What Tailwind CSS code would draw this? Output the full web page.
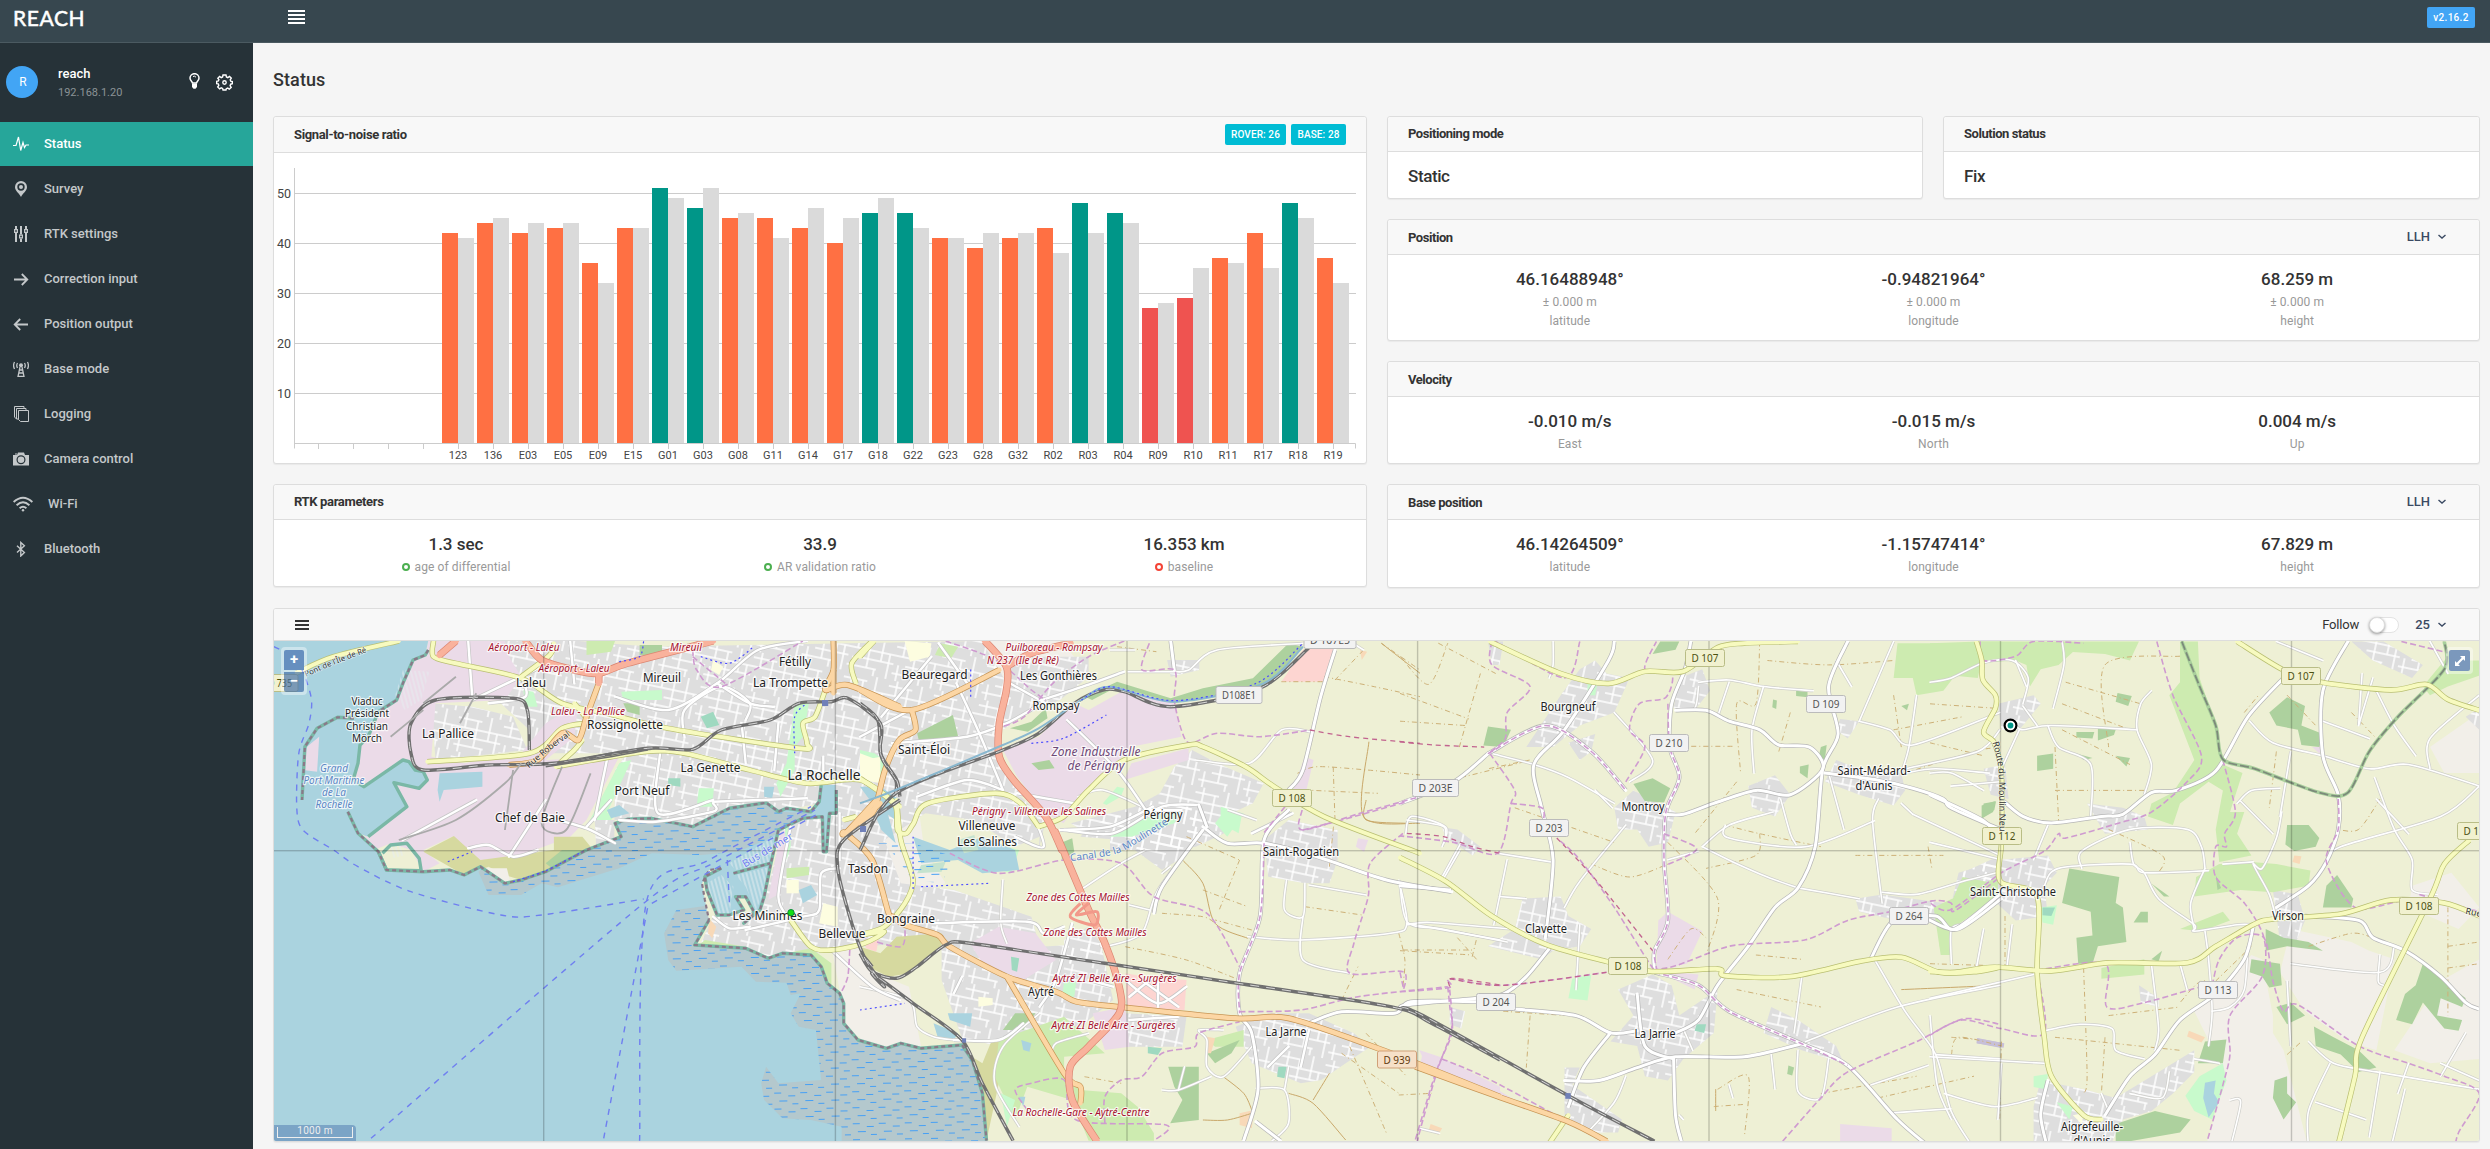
<!DOCTYPE html>
<html lang="en">
<head>
<meta charset="utf-8">
<title>REACH</title>
<script src="https://cdn.jsdelivr.net/npm/@tailwindcss/browser@4"></script>
</head>
<body class="bg-[#f5f5f5] font-['Roboto',sans-serif] text-[13px] leading-5 text-[#333] w-[2490px] h-[1149px] overflow-hidden flex flex-col">

<header class="h-[43px] shrink-0 bg-[#37474f] border-b border-[#4b5a61] flex items-start">
  <div class="w-[288px] pl-[13px] pt-[7px] font-['Lato',sans-serif] font-normal [-webkit-text-stroke:0.5px_#fff] text-[21px] leading-[22px] tracking-[0.6px] text-white">REACH</div>
  <div class="pt-[10px] flex flex-col gap-[2px]">
    <span class="block w-[17px] h-[2px] bg-white"></span><span class="block w-[17px] h-[2px] bg-white"></span><span class="block w-[17px] h-[2px] bg-white"></span><span class="block w-[17px] h-[2px] bg-white"></span>
  </div>
  <div class="ml-auto mr-[15px] mt-[7px] h-[21px] w-[48px] rounded-[2px] bg-[#42a5f5] text-white text-[10px] leading-[22px] font-medium text-center tracking-[0.3px]">v2.16.2</div>
</header>

<div class="flex flex-1 min-h-0">
<aside class="w-[253px] shrink-0 bg-[#263238] text-[#c4c8ca]">
  <div class="h-[79px] flex items-start pt-[23px] pl-[6px]">
    <div class="size-8 rounded-full bg-[#42a5f5] text-white text-[12px] leading-8 text-center pl-[2px]">R</div>
    <div class="ml-5 w-[131px] -mt-[2px]">
      <div class="text-white font-medium leading-5">reach</div>
      <div class="text-[11px] leading-[18px] text-[#8b9296]">192.168.1.20</div>
    </div>
    <svg class="mt-[7px] w-[11px] h-[17px]" viewBox="0 0 11 17" fill="none" stroke="#fff" stroke-width="1.5"><path d="M3.500 10C3 8 1 7.500 1 5a4.500 4.300 0 0 1 9 0c0 2.500-2 3-2.500 5z"/><path d="M3 10.500h5v3.500l-1.500 1.800h-2L3 14z" fill="#fff" stroke="none"/><path d="M4 3.500q2-1 3 .8" stroke-width="1"/></svg>
    <svg class="ml-[16px] mt-[8px] size-[17px]" viewBox="0 0 17 17" fill="none" stroke="#fff" stroke-width="1.400"><path d="M7 1h3l.4 2 1.400.6L13.500 2.400l1.800 1.800-1.100 1.700.5 1.300 1.600.3v2.300l-1.600.4-.6 1.500 1.100 1.600-1.900 1.900-1.600-1.100-1.400.6L10 16H7l-.4-1.600-1.400-.6-1.600 1.100-1.900-1.900 1.100-1.600-.5-1.500L.7 9.600V7.400l1.700-.4.5-1.300L1.800 4.200l1.800-1.800L5.200 3.600l1.400-.6z"/><circle cx="8.500" cy="8.500" r="1.700"/></svg>
  </div>
  <nav class="flex flex-col gap-px font-medium">
    <div class="h-11 flex items-center pl-[13px] gap-[15px] bg-[#26a69a] text-white">
      <svg class="size-4" viewBox="0 0 16 16" fill="none" stroke="currentColor" stroke-width="1.200"><path d="M0 9.500h3L5.500 1l2.200 13.500L10 6.500l1.500 5 1.500-2.500h3"/></svg>Status</div>
    <div class="h-11 flex items-center pl-[13px] gap-[15px]">
      <svg class="size-4" viewBox="0 0 16 16" fill="currentColor"><path fill-rule="evenodd" d="M8 0a6 6 0 0 1 6 6c0 4-4.500 6.500-6 10C6.500 12.500 2 10 2 6a6 6 0 0 1 6-6zm0 2.300a3.700 3.700 0 1 0 0 7.400 3.700 3.700 0 0 0 0-7.400z"/><circle cx="8" cy="6" r="2"/></svg>Survey</div>
    <div class="h-11 flex items-center pl-[13px] gap-[15px]">
      <svg class="size-4" viewBox="0 0 16 16" fill="none" stroke="currentColor"><path stroke-width="2" d="M3 0v3M3 7v9M8 0v8.500M8 12.500V16M13 0v3M13 7v9"/><path stroke-width="1.200" d="M1.600 3.600h2.800v2.800H1.600zM6.600 9.100h2.800v2.800H6.600zM11.600 3.600h2.800v2.800h-2.800z"/></svg>RTK settings</div>
    <div class="h-11 flex items-center pl-[13px] gap-[15px]">
      <svg class="size-4" viewBox="0 0 16 16" fill="none" stroke="currentColor" stroke-width="1.800"><path d="M1 8.500h13M8.800 3l5.500 5.500L8.800 14"/></svg>Correction input</div>
    <div class="h-11 flex items-center pl-[13px] gap-[15px]">
      <svg class="size-4" viewBox="0 0 16 16" fill="none" stroke="currentColor" stroke-width="1.800"><path d="M15 8.500H2M7.200 3L1.700 8.500 7.200 14"/></svg>Position output</div>
    <div class="h-11 flex items-center pl-[13px] gap-[15px]">
      <svg class="size-4" viewBox="0 0 16 16" fill="none" stroke="currentColor" stroke-width="1.300"><path d="M1.500 1Q-.3 4.500 1.500 8M4.500 2Q3 4.500 4.500 7M14.500 1q1.800 3.500 0 7M11.500 2q1.500 2.500 0 5M7 6l-2 9.500h6L9 6M6.200 9h3.600M5.600 12h4.800"/><circle cx="8" cy="4.200" r="2" fill="currentColor" stroke="none"/></svg>Base mode</div>
    <div class="h-11 flex items-center pl-[13px] gap-[15px]">
      <svg class="size-4" viewBox="0 0 16 16" fill="none" stroke="currentColor"><path d="M5.500 4.500h10v11h-8l-2-2zM3.500 13V2.500h9.500V4M1.500 11V.5h9.500V2M1.500 11l2 2h2"/></svg>Logging</div>
    <div class="h-11 flex items-center pl-[13px] gap-[15px]">
      <svg class="size-4" viewBox="0 0 16 16" fill="currentColor"><path fill-rule="evenodd" d="M0 4h4l1-2.500h6L12 4h4v10.500H0zM8 4.300a4.500 4.500 0 1 0 0 9 4.500 4.500 0 0 0 0-9zm0 1.200a3.300 3.300 0 1 1 0 6.600 3.300 3.300 0 0 1 0-6.600z"/><path d="M2 2.500h2v1H2z"/></svg>Camera control</div>
    <div class="h-11 flex items-center pl-[13px] gap-[15px]">
      <svg class="w-5 h-4" viewBox="0 0 20 16" fill="none" stroke="currentColor" stroke-width="1.900"><path d="M.6 6Q10-2.500 19.400 6M3.600 9.200q6.400-5.800 12.800 0M6.600 12.200q3.400-3 6.800 0"/><circle cx="10" cy="14.300" r="1.200" fill="currentColor" stroke="none"/></svg>Wi-Fi</div>
    <div class="h-11 flex items-center pl-[13px] gap-[15px]">
      <svg class="size-4" viewBox="0 0 16 16" fill="none" stroke="currentColor" stroke-width="1.400"><path d="M4 4.800l7.400 6.700-3.600 3.500V1.500l3.600 3.300L4 11.500"/></svg>Bluetooth</div>
  </nav>
</aside>

<main class="flex-1 min-w-0 pl-5 pr-[10px] flex flex-col">
  <h1 class="h-[73px] pt-[25px] text-[18px] leading-6 font-medium tracking-[0.1px]">Status</h1>

  <div class="flex gap-5">
    <!-- left column -->
    <div class="w-[1094px] flex flex-col gap-5">
      <section class="h-[348px] bg-white border border-[#ddd] rounded-[3px] shadow-[0_1px_1px_rgba(0,0,0,0.05)] flex flex-col">
        <div class="h-[36px] shrink-0 bg-[#f8f8f8] border-b border-[#ddd] rounded-t-[3px] flex items-center pl-5 pr-5">
          <h2 class="font-bold tracking-[-0.35px]">Signal-to-noise ratio</h2>
          <span class="ml-auto h-[21px] w-[61px] -mt-px rounded-[2px] bg-[#00bcd4] text-white text-[10px] leading-[21px] font-medium text-center tracking-[0.1px]">ROVER: 26</span>
          <span class="ml-[5px] h-[21px] w-[55px] -mt-px rounded-[2px] bg-[#00bcd4] text-white text-[10px] leading-[21px] font-medium text-center tracking-[0.1px]">BASE: 28</span>
        </div>
        <svg id="snr" class="w-[1092px] h-[310px] font-['Roboto',sans-serif]" viewBox="274 153 1092 310"></svg>
      </section>
      <section class="h-[103px] bg-white border border-[#ddd] rounded-[3px] shadow-[0_1px_1px_rgba(0,0,0,0.05)]">
        <div class="h-[35px] bg-[#f8f8f8] border-b border-[#ddd] rounded-t-[3px] flex items-center pl-5"><h2 class="font-bold tracking-[-0.35px]">RTK parameters</h2></div>
        <div class="grid grid-cols-3 text-center pt-[12px]">
          <div><div class="text-[17px] leading-6 font-medium">1.3 sec</div><div class="text-[12px] tracking-[0.1px] leading-[22px] text-[#999] flex items-center justify-center gap-[5px]"><span class="size-2 rounded-full border-2 border-[#4caf50]"></span>age of differential</div></div>
          <div><div class="text-[17px] leading-6 font-medium">33.9</div><div class="text-[12px] tracking-[0.1px] leading-[22px] text-[#999] flex items-center justify-center gap-[5px]"><span class="size-2 rounded-full border-2 border-[#4caf50]"></span>AR validation ratio</div></div>
          <div><div class="text-[17px] leading-6 font-medium">16.353 km</div><div class="text-[12px] tracking-[0.1px] leading-[22px] text-[#999] flex items-center justify-center gap-[5px]"><span class="size-2 rounded-full border-2 border-[#f44336]"></span>baseline</div></div>
        </div>
      </section>
    </div>

    <!-- right column -->
    <div class="w-[1093px] flex flex-col gap-5">
      <div class="flex gap-5">
        <section class="w-[536px] h-[83px] bg-white border border-[#ddd] rounded-[3px] shadow-[0_1px_1px_rgba(0,0,0,0.05)]">
          <div class="h-[35px] bg-[#f8f8f8] border-b border-[#ddd] rounded-t-[3px] flex items-center pl-5"><h2 class="font-bold tracking-[-0.45px]">Positioning mode</h2></div>
          <div class="pl-5 pt-[12px] text-[17px] leading-6 font-medium tracking-[-0.4px]">Static</div>
        </section>
        <section class="w-[537px] h-[83px] bg-white border border-[#ddd] rounded-[3px] shadow-[0_1px_1px_rgba(0,0,0,0.05)]">
          <div class="h-[35px] bg-[#f8f8f8] border-b border-[#ddd] rounded-t-[3px] flex items-center pl-5"><h2 class="font-bold tracking-[-0.45px]">Solution status</h2></div>
          <div class="pl-5 pt-[12px] text-[17px] leading-6 font-medium tracking-[-0.4px]">Fix</div>
        </section>
      </div>
      <section class="h-[122px] bg-white border border-[#ddd] rounded-[3px] shadow-[0_1px_1px_rgba(0,0,0,0.05)]">
        <div class="h-[35px] bg-[#f8f8f8] border-b border-[#ddd] rounded-t-[3px] flex items-center pl-5 pr-[33px]"><h2 class="font-bold tracking-[-0.45px] pt-px">Position</h2>
          <span class="ml-auto font-medium text-[#3b4a63]">LLH</span><svg class="ml-[8px] size-2" viewBox="0 0 8 8" fill="none" stroke="#3b4a63" stroke-width="1.400"><path d="M.5 2L4 5l3.500-3"/></svg></div>
        <div class="grid grid-cols-3 text-center pt-[12px]">
          <div><div class="text-[17px] leading-6 font-medium">46.16488948°</div><div class="text-[12px] tracking-[0.1px] leading-[19px] pt-[2px] text-[#999]">± 0.000 m<br>latitude</div></div>
          <div><div class="text-[17px] leading-6 font-medium">-0.94821964°</div><div class="text-[12px] tracking-[0.1px] leading-[19px] pt-[2px] text-[#999]">± 0.000 m<br>longitude</div></div>
          <div><div class="text-[17px] leading-6 font-medium">68.259 m</div><div class="text-[12px] tracking-[0.1px] leading-[19px] pt-[2px] text-[#999]">± 0.000 m<br>height</div></div>
        </div>
      </section>
      <section class="h-[103px] bg-white border border-[#ddd] rounded-[3px] shadow-[0_1px_1px_rgba(0,0,0,0.05)]">
        <div class="h-[35px] bg-[#f8f8f8] border-b border-[#ddd] rounded-t-[3px] flex items-center pl-5"><h2 class="font-bold tracking-[-0.45px] pt-px">Velocity</h2></div>
        <div class="grid grid-cols-3 text-center pt-[12px]">
          <div><div class="text-[17px] leading-6 font-medium">-0.010 m/s</div><div class="text-[12px] tracking-[0.1px] leading-[22px] text-[#999]">East</div></div>
          <div><div class="text-[17px] leading-6 font-medium">-0.015 m/s</div><div class="text-[12px] tracking-[0.1px] leading-[22px] text-[#999]">North</div></div>
          <div><div class="text-[17px] leading-6 font-medium">0.004 m/s</div><div class="text-[12px] tracking-[0.1px] leading-[22px] text-[#999]">Up</div></div>
        </div>
      </section>
      <section class="h-[104px] bg-white border border-[#ddd] rounded-[3px] shadow-[0_1px_1px_rgba(0,0,0,0.05)]">
        <div class="h-[35px] bg-[#f8f8f8] border-b border-[#ddd] rounded-t-[3px] flex items-center pl-5 pr-[33px]"><h2 class="font-bold tracking-[-0.4px] pt-[2px]">Base position</h2>
          <span class="ml-auto font-medium text-[#3b4a63]">LLH</span><svg class="ml-[8px] size-2" viewBox="0 0 8 8" fill="none" stroke="#3b4a63" stroke-width="1.400"><path d="M.5 2L4 5l3.500-3"/></svg></div>
        <div class="grid grid-cols-3 text-center pt-[12px]">
          <div><div class="text-[17px] leading-6 font-medium">46.14264509°</div><div class="text-[12px] tracking-[0.1px] leading-[22px] text-[#999]">latitude</div></div>
          <div><div class="text-[17px] leading-6 font-medium">-1.15747414°</div><div class="text-[12px] tracking-[0.1px] leading-[22px] text-[#999]">longitude</div></div>
          <div><div class="text-[17px] leading-6 font-medium">67.829 m</div><div class="text-[12px] tracking-[0.1px] leading-[22px] text-[#999]">height</div></div>
        </div>
      </section>
    </div>
  </div>

  <section class="mt-5 h-[534px] bg-white border border-[#ddd] rounded-[3px] shadow-[0_1px_1px_rgba(0,0,0,0.05)] overflow-hidden flex flex-col">
    <div class="h-[32px] shrink-0 bg-[#f8f8f8] border-b border-[#ddd] flex items-center pl-[21px] pr-[33px]">
      <div class="flex flex-col gap-[2px]"><span class="block w-[14px] h-[2px] bg-[#333]"></span><span class="block w-[14px] h-[2px] bg-[#333]"></span><span class="block w-[14px] h-[2px] bg-[#333]"></span></div>
      <span class="ml-auto tracking-[-0.15px]">Follow</span>
      <span class="ml-[10px] w-[30px] h-4 rounded-full border border-[#e3e3e3] bg-white flex items-center"><span class="-ml-px size-4 rounded-full bg-white border border-[#ddd] shadow-[0_1px_3px_rgba(0,0,0,0.4)]"></span></span>
      <span class="ml-[16px] font-medium text-[#3b4a63]">25</span><svg class="ml-[8px] size-2" viewBox="0 0 8 8" fill="none" stroke="#3b4a63" stroke-width="1.400"><path d="M.5 2L4 5l3.500-3"/></svg>
    </div>
    <div class="relative flex-1 overflow-hidden">
      <svg id="map" class="block w-[2205px] h-[500px] font-['Noto_Sans',sans-serif]" viewBox="274 641 2205 500">
        <defs>
          <pattern id="streets" width="46" height="40" patternUnits="userSpaceOnUse" patternTransform="rotate(12)"><path d="M0 6h24M0 15h46M12 24h34M0 33h30M8 0v15M20 6v27M33 0v24M41 15v25M5 24v16M28 33v7" fill="none" stroke="#fff" stroke-width="1.500"/></pattern>
          <pattern id="flats" width="26" height="16" patternUnits="userSpaceOnUse" patternTransform="rotate(-1)"><path d="M1 2.500h7M15 5.500h7M6 10.500h8M19 13.500h6" stroke="#46a0f5" stroke-width="1.200"/></pattern>
          <pattern id="hatch" width="4" height="4" patternUnits="userSpaceOnUse" patternTransform="rotate(75)"><path d="M0 1h4" stroke="#e6edf0" stroke-width="1"/></pattern>
        </defs>
      </svg>
      <div class="absolute left-[7px] top-[6px] p-[3px] rounded-[4px] bg-white/40 flex flex-col gap-[2px]">
        <span class="w-[20px] h-[20px] rounded-t-[2px] bg-[#668fbf] text-white font-bold text-[15px] leading-[19px] text-center">+</span>
        <span class="w-[20px] h-[20px] rounded-b-[2px] bg-[#003c88]/50 text-white font-bold text-[15px] leading-[18px] text-center">−</span>
      </div>
      <div class="absolute right-[6px] top-[6px] p-[3px] rounded-[4px] bg-white/40">
        <span class="flex items-center justify-center size-[21px] rounded-[2px] bg-[#7b98bc]"><svg class="size-[10px]" viewBox="0 0 10 10" fill="#fff"><path d="M5 0h5v5L8.300 3.300 3.300 8.300 5 10H0V5l1.700 1.700 5-5z"/></svg></span>
      </div>
      <div class="absolute left-0 bottom-0 w-[82px] h-[16px] p-[3px] pt-[2px] rounded-tr-[4px] bg-[#7ba4c6]">
        <div class="h-[11px] border border-t-0 border-[#eee] text-[#eee] text-[10px] leading-[8px] text-center tracking-[0.3px]">1000 m</div>
      </div>
    </div>
  </section>
</main>
</div>

<script>
const NS = 'http://www.w3.org/2000/svg';
function el(parent, tag, attrs, text) {
  const e = document.createElementNS(NS, tag);
  for (const k in attrs) e.setAttribute(k, attrs[k]);
  if (text !== undefined) e.textContent = text;
  parent.appendChild(e);
  return e;
}

/* ---- signal-to-noise chart ---- */
const snr = document.getElementById('snr');
const O = '#ff7043', T = '#009688', R = '#ef5350';
const sats = [['123',42,41,O],['136',44,45,O],['E03',42,44,O],['E05',43,44,O],['E09',36,32,O],['E15',43,43,O],['G01',51,49,T],['G03',47,51,T],['G08',45,46,O],['G11',45,41,O],['G14',43,47,O],['G17',40,45,O],['G18',46,49,T],['G22',46,43,T],['G23',41,41,O],['G28',39,42,O],['G32',41,42,O],['R02',43,38,O],['R03',48,42,T],['R04',46,44,T],['R09',27,28,R],['R10',29,35,R],['R11',37,36,O],['R17',42,35,O],['R18',48,45,T],['R19',37,32,O]];
for (let v = 10; v <= 50; v += 10) {
  el(snr, 'rect', {x: 294, y: 443 - 5 * v, width: 1062, height: 1, fill: '#ccc'});
  el(snr, 'text', {x: 291, y: 447.5 - 5 * v, 'text-anchor': 'end', 'font-size': 12.5, fill: '#444'}, v);
}
el(snr, 'path', {d: 'M294.500 168V448.500M294 443.500H1355.500V448.500', fill: 'none', stroke: '#ccc'});
for (let i = 0; i < 30; i++) el(snr, 'rect', {x: 318 + 35 * i, y: 444, width: 1, height: 5, fill: '#ccc'});
sats.forEach(([name, rover, base, color], i) => {
  const x = 458 + 35 * i;
  el(snr, 'rect', {x: x - 16, y: 443 - 5 * rover, width: 16, height: 5 * rover, fill: color});
  el(snr, 'rect', {x: x, y: 443 - 5 * base, width: 16, height: 5 * base, fill: '#dadada'});
  el(snr, 'text', {x: x, y: 459, 'text-anchor': 'middle', 'font-size': 11, fill: '#444'}, name);
});

/* ---- map ----
   Geometry strings are lists of "x,y"; a letter selects the sheet whose
   local units the following points use. */
const map = document.getElementById('map');
const sheets = {A:[260,470,2.45,3], B:[260,800,2.45,3], C:[860,470,2.8,3], D:[860,800,2.45,3], E:[1400,470,2.6133,2.3093], F:[1930,470,2.8,2.3093], P:[0,0,1,1]};
function pts(s) {
  let t = sheets.P;
  const out = [];
  for (const w of s.trim().split(/\s+/)) {
    if (sheets[w]) { t = sheets[w]; continue; }
    const [x, y] = w.split(',').map(Number);
    out.push([t[0] + x / t[2], t[1] + y / t[3]]);
  }
  return out;
}
const f1 = n => n.toFixed(1);
function line(s) { return 'M' + pts(s).map(p => f1(p[0]) + ' ' + f1(p[1])).join('L'); }
function curve(s) {
  const p = pts(s);
  let d = 'M' + f1(p[0][0]) + ' ' + f1(p[0][1]);
  for (let i = 0; i < p.length - 1; i++) {
    const a = p[i - 1] || p[i], b = p[i], c = p[i + 1], e = p[i + 2] || c;
    d += 'C' + [b[0] + (c[0] - a[0]) / 7, b[1] + (c[1] - a[1]) / 7, c[0] - (e[0] - b[0]) / 7, c[1] - (e[1] - b[1]) / 7, c[0], c[1]].map(f1).join(' ');
  }
  return d;
}
function area(fill, ...list) { for (const s of list) el(map, 'path', {d: line(s) + 'Z', fill}); }
function stroke(color, width, dash, list, cap) {
  for (const s of list) el(map, 'path', {d: curve(s), fill: 'none', stroke: color, 'stroke-width': width, 'stroke-dasharray': dash || 'none', 'stroke-linejoin': 'round', 'stroke-linecap': cap || 'butt'});
}
function road(casing, fill, w, list) { stroke(casing, w + 1.4, '', list); stroke(fill, w, '', list, 'round'); }

area('#eef0d5', '274,641 2479,641 2479,1141 274,1141');

/* pale heath and scrub */
area('#f2efe9',
  'C 300,513 560,513 600,560 500,640 380,640',
  'C 100,980 160,980 180,1140 100,1140', 'D 0,60 130,100 210,250 120,290 40,250',
  'D 0,500 120,560 150,740 0,740', 'B 1400,440 1470,440 1500,560 1568,600 1568,745 1440,700',
  'F 740,1250 900,1120 930,1130 960,1260 960,1300 990,1340 1060,1568 770,1568 830,1400',
  'F 1010,1060 1180,1090 1230,1110 1300,1130 1250,1340 1170,1320 1050,1250 980,1160',
  'F 1400,640 1538,560 1538,700 1440,700', 'F 1460,930 1350,960 1340,1010 1480,1060 1538,1010',
  'F 1430,1180 1538,1130 1538,1360 1400,1370 1300,1340');

/* town ground */
const towns = [
  'A 412,513 780,513 960,530 C 340,513 390,600 410,640 380,760 390,840 450,980 520,1050 500,1140 D 440,110 380,140 280,60 160,40 60,120 100,250 230,270 420,350 440,440 590,430 620,600 530,690 430,720 350,740 250,715 200,540 200,450 110,430 0,440 B 1420,440 1350,465 1245,475 1190,445 1080,430 1110,350 1230,330 1260,190 1280,80 1380,40 1370,10 1270,35 1220,8 1060,75 880,60 820,60 860,960 A 870,900 900,850 660,850 660,780 590,700 620,620',
  'A 420,700 520,710 620,740 655,840 430,870',
  'C 440,560 640,560 640,620 560,690 450,740 400,780 400,640',
  'C 860,570 950,570 950,600 870,620', 'C 770,1010 840,970 880,890 930,840 1000,880 1130,940 1100,1000 1040,1030 1020,1090 940,1130 840,1140 700,1140 700,1060 620,1080 590,1060',
  'D 560,80 700,10 840,10 840,100 780,180 740,210 640,120 540,110',
  'D 990,120 1050,60 1170,90 1170,180 1150,250 1090,250 1000,230',
  'D 500,420 560,380 590,430 570,470 500,500', 'D 920,680 1000,640 1100,640 1210,700 1250,740 1190,790 1130,840 1080,850 960,790',
  'D 650,640 800,650 790,740 650,740',
  'E 470,460 510,440 540,470 600,480 560,560 470,590 400,640 370,640 330,640 420,520', 'E 440,630 510,610 500,650 470,670', 'E 230,396 270,396 260,450 240,450',
  'E 730,480 790,460 810,510 770,555 715,550', 'E 560,780 610,740 700,780 720,790 700,860 650,870 620,830 570,830',
  'E 910,730 980,705 1020,750 980,800 920,780', 'E 1140,670 1200,690 1310,700 1320,740 1290,775 1200,750 1110,720', 'E 1150,575 1200,580 1170,620 1140,600',
  'E 320,990 420,985 440,1030 500,1060 470,1100 400,1110 370,1130 230,1100 300,1060',
  'E 570,1200 660,1165 710,1190 730,1260 830,1200 820,1300 740,1360 700,1410 640,1400 620,1330 550,1320 610,1260',
  'E 970,1240 1040,1270 1140,1330 1160,1370 1050,1340 950,1300', 'E 1190,990 1260,980 1420,1000 1440,1050 1300,1040 1200,1020', 'E 430,1380 470,1380 450,1420 580,1500 570,1530 490,1530 430,1500',
  'E 110,825 150,830 210,870 190,890 120,850', 'E 130,1240 170,1250 160,1290 130,1280', 'E 1470,930 1568,890 1568,980 1470,980',
  'F 190,540 290,520 310,540 250,600 200,600', 'F 150,690 210,680 220,760 170,750', 'F 80,930 200,900 330,890 355,930 320,960 330,1030 240,1040 160,980 60,1060 60,1000',
  'F 440,770 540,780 600,800 610,830 490,840', 'F 1180,396 1270,396 1380,450 1350,480 1240,440', 'F 960,970 1030,980 1050,1040 1020,1100 980,1090', 'F 310,1410 430,1430 520,1450 640,1390 740,1340 740,1390 680,1440 620,1480 540,1500 500,1568 290,1568 290,1470', 'F 1500,570 1538,550 1538,600', 'F 585,1190 640,1220 640,1240 590,1230'];
area('#dedede', ...towns);
area('url(#streets)', ...towns);

/* industrial and retail ground */
const port = 'A 412,513 600,513 610,560 640,620 600,690 430,700 420,860 500,880 640,850 660,820 700,760 780,700 770,800 700,870 880,860 B 800,60 760,110 620,175 540,180 470,110 400,150 440,190 400,215 370,150 320,130 280,150 215,35 265,115 265,100 A 360,1010 328,938 390,955 410,930 400,905 380,900 365,875 350,870 255,950 228,930 240,880 245,825 265,800 290,725 335,690 350,640 375,570 405,555';
area('#ebdbe8', port, 'B 1275,95 1290,90 1275,280 1245,300',
  'C 400,840 500,800 600,700 640,720 740,660 880,700 900,800 760,830 700,900 620,980 570,1060 520,1030 440,920', 'C 760,880 920,835 920,870 740,930',
  'C 1245,860 1270,870 1250,960 1210,970', 'D 270,430 340,380 430,400 480,480 400,540 300,490', 'D 570,640 650,620 660,740 600,750', 'D 1370,750 1420,770 1568,860 1568,880 1400,830',
  'D 1220,115 1245,120 1235,155 1215,140', 'E 675,1040 700,1020 790,1065 750,1140 670,1155', 'E 720,1160 780,1165 770,1200 700,1170', 'E 1150,1510 1285,1520 1285,1568 1150,1568', 'E 60,1345 140,1370 310,1460 120,1400 50,1380', 'F 1070,640 1100,640 1090,655');
area('#fdd5d1', 'D 650,520 700,530 800,540 795,630 655,625', 'C 1240,540 1330,520 1300,635 1180,635', 'B 1480,425 1515,420 1510,455 1485,445');
area('#c7bfd8', 'F 132,1312 208,1324 206,1334 130,1324', 'E 1510,1313 1568,1322 1568,1334 1508,1324');

/* scrub */
area('#d6d99f', 'B 400,155 475,108 540,180 600,170 720,150 720,110 790,110 810,140 720,210 640,240 600,225 560,200 500,225',
  'D 0,440 50,460 90,410 200,400 200,440 120,520 70,530 20,500', 'D 320,730 400,700 390,740 340,850 310,1022 290,880 260,760 300,790');

/* grass, woods, parks */
area('#cdebb0', 'A 800,513 870,513 860,545 800,555', 'C 225,520 275,530 255,565 210,555', 'B 1290,205 1345,200 1345,225 1290,235', 'B 1090,420 1190,440 1245,470 1350,445 1400,490 1400,560 1375,500 1350,465 1245,475 1190,445 1070,440',
  'D 340,720 500,650 600,760 500,770 500,830 540,870 640,880 680,920 720,1000 720,1022 560,1022 520,900 410,860 380,960 330,830',
  'D 850,720 940,690 940,740 870,740',
  'E 1300,400 1470,400 1510,396 1568,396 1568,440 1520,440 1510,480 1450,475 1420,510 1350,520 1340,480 1290,480',
  'F 0,400 140,396 585,396 560,440 490,425 400,420 360,450 310,460 280,500 270,450 240,440 150,445 60,480 30,510 0,510',
  'F 700,396 750,396 755,480 800,590 820,680 875,700 840,790 880,790 860,840 900,890 810,905 800,830 820,740 780,720 700,770 680,820 610,800 620,770 680,745 740,670 670,520 700,490',
  'F 745,940 810,910 900,905 970,910 1065,925 1060,960 960,975 870,970 740,985', 'F 10,1010 190,940 190,990 130,1020 60,1060 60,1120 30,1120', 'F 700,1060 820,1020 840,1040 760,1065',
  'F 1380,500 1440,440 1538,440 1538,475 1450,500 1400,520', 'F 480,1150 600,1130 600,1165 480,1175', 'E 1470,940 1530,950 1560,960 1500,1020 1430,1050 1440,1110 1410,1100 1410,1060');
area('#add19e', 'A 930,525 985,525 985,560 930,555', 'A 890,700 930,700 930,735 900,725', 'C 160,790 260,735 275,800 165,812', 'C 420,775 480,755 520,715 525,745 470,785', 'C 480,880 530,870 545,895 500,900',
  'C 630,680 720,635 870,685 960,655 1100,625 1200,520 1240,530 1140,650 880,700 720,650 650,690', 'D 490,130 520,115 525,155 495,180', 'D 755,800 830,800 830,960 760,970 790,900 770,860',
  'D 850,760 930,720 910,760 870,790', 'D 380,640 430,640 400,690 350,690', 'B 700,190 740,150 790,150 720,210',
  'E 230,592 290,600 270,640 218,636', 'E 610,725 660,712 706,735 690,768 640,765', 'E 660,425 680,396 730,396 720,415', 'E 1100,640 1115,635 1110,670 1095,660', 'E 1045,685 1068,680 1065,712 1045,700',
  'E 1520,775 1555,765 1550,790 1520,805', 'E 1035,510 1065,512 1065,525 1035,522', 'E 975,530 985,532 983,552 973,548', 'E 1310,545 1330,540 1325,555', 'E 1015,1375 1030,1380 1025,1398 1012,1395',
  'F 525,515 565,522 555,545 520,535', 'F 950,560 1000,525 1050,545 1040,590 1100,610 1090,640 1040,635 1030,600 970,590', 'F 410,605 460,605 455,620 410,618', 'F 470,595 520,600 515,612 470,625', 'F 300,660 345,655 345,690 300,695', 'F 410,655 455,665 430,670', 'F 520,660 560,665 550,685', 'F 150,770 185,765 180,785 145,805',
  'F 1000,820 1060,820 1090,850 1080,870 1020,880 995,865', 'F 390,920 530,940 520,1000 540,1010 550,1090 470,1100 455,1140 415,1140 410,1080 455,1075 450,1020 370,1000', 'F 1110,960 1140,935 1185,990 1180,1010 1100,1010',
  'F 940,1060 990,1080 1060,1090 1100,1110 1000,1100 940,1110', 'F 900,1130 980,1140 985,1190 950,1195 930,1170 895,1160', 'F 970,1240 1010,1230 1050,1260 1000,1280', 'F 1075,1285 1130,1310 1200,1340 1250,1380 1200,1390 1150,1350 1080,1330',
  'F 1380,1140 1440,1180 1500,1220 1490,1240 1430,1220 1420,1260 1490,1270 1480,1295 1440,1290 1380,1230 1350,1280 1305,1270 1330,1210 1360,1190',
  'F 965,1410 1000,1400 1000,1440 1025,1460 990,1500 960,1450', 'F 770,1320 830,1315 820,1370 750,1370', 'F 520,1510 630,1480 730,1500 700,1530 560,1550 540,1568 520,1568', 'F 590,1020 610,1020 610,1045 570,1045', 'F 620,1130 650,1110 640,1135', 'F 800,935 815,965 805,970', 'F 620,955 670,985 655,985');
area('#c8facc', 'A 880,880 910,870 850,1030 880,1020 860,1050 B 820,60 800,80', 'A 1075,955 1112,955 1108,1010 1070,1010', 'A 645,660 670,665 680,710 650,710', 'A 885,665 985,660 985,690 890,690', 'A 1310,700 1345,700 1330,800 1310,830 1310,900 1275,980 1265,940 1290,880',
  'C 680,1000 720,950 740,955 730,980 690,1005', 'C 0,840 40,850 80,880 60,920 0,900', 'C 1010,1010 1070,1030 1060,1090 1010,1060', 'C 700,1100 780,1050 900,1020 880,1060 760,1100', 'D 330,130 390,150 370,220 310,200', 'D 500,545 530,545 525,590 495,590', 'D 895,30 940,40 900,110 870,70', 'D 345,880 380,900 360,980',
  'E 450,1175 500,1165 490,1225 440,1220', 'E 490,490 515,495 510,520 490,520', 'F 755,1400 820,1370 830,1410 790,1500 740,1480 715,1445', 'F 290,1400 330,1395 325,1430 290,1425', 'F 355,1460 400,1470 390,1500', 'F 310,1010 355,1005 345,1050 315,1045', 'B 1285,60 1300,60 1300,140 1290,180');
area('#9fd9c0', 'D 1025,800 1045,800 1040,835 1022,830', 'F 315,1010 350,1010 340,1030 315,1028', 'A 1080,740 1110,725 1125,765 1095,775', 'D 705,740 740,745 730,765 705,760', 'E 775,1280 800,1280 795,1300 770,1295', 'A 1000,925 1030,925 1030,950 1000,945', 'D 370,470 390,475 385,515 372,510');
area('#fdfde0', 'C 125,513 200,520 195,560 140,575', 'A 1110,570 1135,590 1125,615 1105,600', 'A 1480,870 1520,860 1520,940 1475,930', 'C 0,850 50,870 50,930 0,925', 'D 290,590 325,595 325,615 290,620', 'B 1380,310 1415,320 1415,380 1370,370', 'B 1290,240 1320,240 1320,280 1290,280', 'F 400,1490 430,1485 425,1510');
area('#f8d9b8', 'F 725,1295 770,1310 760,1322 720,1308', 'F 1020,890 1040,892 1035,910 1015,905', 'C 1400,540 1420,545 1405,570', 'D 850,710 870,715 860,760 850,760', 'D 930,940 965,930 960,985 930,975', 'E 80,1510 110,1520 100,1535 75,1525', 'B 1100,355 1118,380 1108,415 1098,400');

/* sea and inland water */
area('#aad3df', '274,641 A 412,513 405,555 375,570 350,640 335,690 290,725 265,800 245,825 240,880 228,930 255,950 350,870 365,875 380,900 400,905 410,930 390,955 328,938 360,1010 265,1100 B 265,110 240,100 290,155 310,210 400,215 465,210 500,225 540,200 600,250 640,240 700,215 800,150 885,110 870,70 900,58 960,55 1060,80 1150,25 1240,8 1270,35 1290,25 1350,35 1370,5 1375,-45 1410,-45 1412,40 1395,40 1390,155 1380,155 1378,50 1330,55 1270,90 1250,200 1235,290 1225,330 1185,370 1210,335 1190,290 1165,290 1185,330 1150,345 1120,345 1095,270 1090,230 1130,205 1100,210 1083,250 1090,300 1100,360 1065,435 1190,445 1245,475 1280,460 1350,465 1375,500 1390,550 1420,580 1430,610 1430,670 1465,720 1535,745 D 100,730 150,745 250,735 275,780 300,880 310,1022 274,1141 P 274,1141',
  'A 440,910 545,905 545,950 450,960 440,995 435,960', 'A 1470,950 1520,950 1568,990 1568,1060 1500,1000', 'A 850,1020 880,1005 905,1030 860,1045', 'A 1235,950 1260,950 1255,985 1235,980',
  'B 1320,270 1350,255 1365,285 1330,310', 'D 130,110 220,150 300,110 380,150 390,210 300,220 240,180 150,190', 'D 215,640 275,640 270,680 220,660', 'D 395,720 420,730 415,755 400,750', 'D 180,670 240,700 230,720 190,710', 'D 390,890 405,890 400,920', 'F 770,1415 800,1410 795,1440 810,1460 780,1495 765,1450', 'C 40,1030 75,1020 100,1120 60,1080');
area('#c5e3cf', 'D 240,120 280,105 290,150 255,160', 'D 150,195 210,185 200,215 140,220');
area('#ebdbe8', 'A 115,830 145,800 140,905 105,900');
area('#f2efe9', 'B 545,205 605,205 612,240 600,250');
const flats = ['B 885,110 870,70 900,58 960,55 1060,80 1150,25 1240,8 1270,35 1350,40 1240,120 1170,155 1080,165 960,160 880,205 800,235 730,262 690,250 640,285 560,285 535,215 545,205 600,250 640,240 700,215 800,150',
  'B 1090,318 1020,330 990,400 1000,480 1020,512 1180,500 1215,545 1290,548 1300,585 1325,580 1300,640 1320,680 1362,690 1375,840 1270,850 1240,800 1228,850 1235,900 1280,955 1350,960 1425,980 1425,1022 D 310,1022 300,880 275,780 250,735 150,745 100,730 B 1535,745 1465,720 1430,670 1430,610 1420,580 1390,550 1375,500 1350,465 1280,460 1245,475 1190,445 1065,435 1100,360'];
area('#b4c8cd', ...flats);
area('url(#flats)', ...flats, 'D 40,130 130,130 230,170 200,250 130,240 80,160');
area('url(#hatch)', 'B 1095,250 1130,225 1160,260 1150,345 1120,345', 'B 1165,225 1250,200 1230,290 1215,330 1190,260', 'B 1150,190 1260,110 1250,185 1165,210', 'B 320,140 350,135 355,165 325,175', 'A 350,600 415,605 395,690 355,720 330,680');

/* coast outline */
const coast = ['A 412,540 405,555 375,570 350,640 335,690 290,725 265,800 245,825 240,880 228,930 255,950 350,870 365,875 380,900 400,905 410,930 390,955 328,938 360,1010 265,1100',
  'A 230,745 190,742 140,775 110,830 103,990', 'B 215,35 240,100 290,155 310,210 400,215 465,210 500,225 540,200 600,250 640,240 700,215 800,150 885,110 870,70 900,58 960,55 1060,80 1150,25 1240,8 1270,35 1290,25 1350,35 1370,5 1375,-45',
  'B 1412,-30 1412,40 1395,40 1388,155 1380,155 1378,50 1330,55 1270,90 1250,200 1235,290 1225,330 1185,370 1210,335 1190,290 1165,290 1185,330 1150,345 1120,345 1095,270 1090,230 1130,205', 'B 1100,360 1065,435 1190,445 1245,475 1280,460 1350,465 1375,500 1390,550 1420,580 1430,610 1430,670 1465,720 1535,745 D 100,730 150,745 250,735 275,780 300,880 310,1022', 'B 1160,220 1250,190', 'B 290,155 310,210 395,212 390,175 360,130 320,135 300,160'];
for (const s of coast) el(map, 'path', {d: line(s), fill: 'none', stroke: '#7ab8a6', 'stroke-width': 3.4, 'stroke-linejoin': 'round'});
for (const s of coast.slice(1, 6).concat('A 412,540 405,555 375,570 350,640 335,690 290,725', 'B 1130,205 1100,210 1083,250 1090,300 1100,360')) el(map, 'path', {d: line(s), fill: 'none', stroke: '#8a7888', 'stroke-width': 2.2, 'stroke-dasharray': '4 3', 'stroke-linejoin': 'round'});

/* field tracks */
stroke('#cdb077', 1, '5 3 1 3', [
  'C 1300,620 1440,650 1568,680', 'C 1330,630 1410,540', 'C 1180,635 1300,635', 'C 1460,520 1568,600', 'C 1245,960 1450,970', 'C 1225,910 1280,890 1420,900 1568,915', 'C 1330,1050 1325,890', 'C 720,530 830,545',
  'D 840,270 950,320', 'D 930,180 880,330', 'D 800,110 930,180', 'D 740,340 840,350 870,370', 'D 650,440 800,480 930,540', 'D 1090,320 1230,345', 'D 1330,450 1500,450', 'D 1320,400 1335,480 1330,560', 'D 1500,470 1510,420', 'D 1180,760 1320,880', 'D 1200,740 1290,1000', 'D 1240,700 1340,830', 'D 1320,885 1400,880', 'D 1180,600 1220,500', 'D 960,390 870,360', 'D 550,830 640,850', 'D 1160,80 1150,200',
  'E 0,516 180,575', 'E 0,430 75,495 125,400', 'E 155,640 210,470', 'E 160,710 340,670 230,690', 'E 730,638 870,638', 'E 940,396 930,540 880,540 890,700', 'E 880,720 770,840', 'E 940,840 930,890 800,920', 'E 850,820 940,840 1100,870', 'E 700,860 830,990 800,1120', 'E 500,910 600,940 700,910', 'E 300,780 560,860', 'E 0,1110 190,1120', 'E 150,1080 200,1130', 'E 270,1250 440,1260', 'E 1190,890 1420,890', 'E 1380,870 1390,920', 'E 960,440 1120,450 1290,440', 'E 1020,560 990,650', 'E 1320,700 1500,650 1568,640', 'E 930,1120 1050,1130', 'E 880,1200 1100,1240', 'E 830,1430 910,1400 900,1540', 'E 820,1470 900,1465', 'E 1290,520 1310,640', 'E 0,580 170,590', 'E 1100,1440 1350,1400', 'E 340,1260 330,1380', 'E 700,1130 760,1060 800,1080', 'E 1250,1450 1500,1400', 'E 100,400 250,470', 'E 1290,600 1470,570',
  'F 0,540 180,550', 'F 0,630 150,660', 'F 380,490 590,540', 'F 370,540 560,600', 'F 350,640 360,810', 'F 350,740 600,740', 'F 370,600 560,680', 'F 700,430 490,450 500,640', 'F 500,830 650,890 640,930', 'F 430,1150 440,1400 430,1440', 'F 490,1310 480,1440', 'F 350,1310 700,1340', 'F 500,1260 700,1240', 'F 1450,1010 1450,1260', 'F 1450,1100 1538,1090', 'F 1450,1150 1538,1140', 'F 970,650 950,780', 'F 1260,760 1200,830 1140,830', 'F 1060,1100 1180,1070 1240,1080', 'F 210,1030 210,1150', 'F 200,1320 195,1500', 'F 60,1310 130,1315', 'F 1000,1350 1040,1320', 'F 880,560 920,520', 'F 1000,520 1080,590', 'F 1180,560 1250,620', 'F 0,1140 190,1145', 'F 60,1350 80,1310 200,1330', 'F 820,1200 760,1180 700,1230', 'F 800,1180 900,1100']);
stroke('#c9a86a', 1, '', ['D 790,180 840,250 870,370 950,415', 'D 1240,0 1240,60 1340,70', 'D 1050,880 1110,910 1190,1020', 'D 890,830 940,880 960,930', 'D 840,960 900,960 960,940', 'D 1150,820 1110,900', 'C 1425,815 1410,1040 1568,1060', 'C 1460,520 1520,570 1568,610', 'E 1310,1200 1568,1190', 'E 825,1430 825,1480']);

/* minor roads */
road('#cfcfcb', '#fff', 1.6, [
  'C 750,605 870,605 920,600 1000,540 1240,520', 'C 940,870 1090,880 1180,780 1260,785', 'C 700,540 770,540', 'C 610,980 680,960 790,1010', 'C 1030,1020 1110,1050', 'C 1370,513 1410,540',
  'D 590,430 600,440 690,400 730,270 840,90', 'D 540,270 640,190 700,150', 'D 740,220 760,200', 'D 1320,240 1340,370 1300,400 1080,420 950,410', 'D 1090,250 1085,350 1040,330 1045,240', 'D 1085,350 1085,480 1200,520', 'D 1100,255 1240,285', 'D 1340,370 1568,420', 'D 1430,235 1470,150', 'D 1340,60 1430,80 1430,130', 'D 890,690 830,690 850,720 850,800 890,830 960,740', 'D 740,870 780,870 860,830', 'D 780,870 795,800', 'D 970,865 1040,870 1050,970 1010,1022', 'D 1050,800 1040,870', 'D 350,240 345,370 360,430', 'D 660,315 710,330', 'D 560,700 480,730 470,770', 'D 0,560 120,600 140,680 180,710 230,720', 'D 390,980 330,850 350,740 440,640', 'D 1370,985 1420,1000',
  'E 240,655 350,680 440,710 560,770', 'E 555,780 510,740', 'E 560,560 660,670 600,720', 'E 860,490 830,570', 'E 950,500 920,600 925,700', 'E 780,490 860,485 950,500 1080,510', 'E 1200,580 1290,396', 'E 1200,580 1280,600 1340,635 1568,560', 'E 1320,690 1510,650 1568,600', 'E 1350,520 1330,640 1310,700', 'E 1320,700 1400,690 1540,700', 'E 1120,700 1160,830', 'E 1250,760 1235,810 1260,1000', 'E 850,820 860,850 1060,870 1240,810', 'E 995,760 1020,840 1035,865', 'E 975,790 860,820 790,870', 'E 790,870 870,905 960,940 1040,965', 'E 1040,965 1200,990', 'E 700,900 780,880', 'E 255,885 395,905', 'E 245,1050 280,900', 'E 260,985 330,990', 'E 0,960 20,1045 110,1060 280,1090', 'E 20,1050 80,1045 290,1060', 'E 160,860 110,940', 'E 110,870 120,825 30,800 15,840', 'E 590,820 470,950 430,1010', 'E 470,1050 460,1200', 'E 1050,1170 1030,1300', 'E 970,1350 980,1430', 'E 1040,1340 1040,1435 1100,1450 1120,1360', 'E 1060,1320 1300,1240 1568,1190', 'E 1240,1130 1320,1250 1400,1350 1440,1480 1500,1568', 'E 1400,1350 1568,1360', 'E 1280,1485 1440,1475', 'E 1230,1420 1380,1375', 'E 860,1420 870,1450', 'E 490,1530 560,1460 590,1400', 'E 730,1490 740,1500', 'E 740,1290 765,1340', 'E 400,396 400,450 390,480', 'E 720,555 770,550 780,500', 'E 1260,975 1350,980 1470,950 1560,930', 'E 1340,795 1568,890', 'E 1310,770 1340,795', 'E 1440,730 1568,720', 'E 1140,440 1180,500',
  'F 0,490 60,480 150,445 230,440 275,480 260,540', 'F 370,396 375,450 345,550', 'F 240,590 260,600 340,590 580,600', 'F 330,590 360,640 450,680 450,800', 'F 620,510 590,540 580,600 620,680 600,750', 'F 250,600 200,690', 'F 260,545 300,590', 'F 0,700 60,700 150,740', 'F 425,920 425,880 560,830 720,830 760,870 770,920', 'F 320,960 360,920 560,910 600,930 780,925', 'F 560,860 570,910 600,930 640,990 740,1050 740,1065 860,1050 905,1050', 'F 770,920 730,1000 740,1060', 'F 770,1065 780,1130 790,1250 780,1330', 'F 895,580 960,630 1100,660 1230,690 1340,680 1538,730', 'F 1010,650 980,800', 'F 860,770 900,740 980,735', 'F 870,765 960,840', 'F 985,790 970,850 930,920 905,910 950,980 970,1040', 'F 820,910 905,905', 'F 1245,710 1300,830 1350,900 1350,970 1420,980', 'F 1100,580 1230,620', 'F 1200,590 1210,470', 'F 1250,510 1300,590 1360,660', 'F 1538,730 1430,800 1150,870 1110,905', 'F 970,396 1100,440', 'F 1400,690 1400,620 1538,520', 'F 1450,470 1400,396', 'F 1200,590 1240,480', 'F 1010,1140 1260,1160 1300,1100', 'F 1260,1120 1255,1180 1270,1190', 'F 150,1060 130,1150', 'F 230,1050 215,1150', 'F 100,1050 60,1060 60,1140', 'F 0,1220 290,1165', 'F 320,1295 420,1280 510,1290 520,1340 600,1360', 'F 0,1355 320,1370', 'F 0,1260 20,1420 60,1500', 'F 40,1440 180,1470 300,1450', 'F 200,1370 190,1500', 'F 620,1140 640,1290 630,1340', 'F 700,1140 720,1200', 'F 890,1100 880,1200 840,1240 790,1250', 'F 1000,1180 1010,1330', 'F 1060,1320 1130,1370 1250,1390 1538,1430', 'F 1120,1370 1060,1480 1060,1568', 'F 1080,1460 1220,1500', 'F 1260,1390 1230,1540', 'F 1330,1430 1290,1568', 'F 1500,1300 1430,1400', 'F 1430,1370 1538,1410', 'F 840,1455 870,1460 840,1568', 'F 740,1360 810,1370', 'F 670,1390 650,1450 560,1440', 'F 480,1440 500,1480', 'F 1340,840 1250,760', 'F 330,820 290,900', 'F 0,860 200,900', 'F 240,440 270,500', 'F 1340,1370 1310,1440']);

/* urban avenues */
road('#c6c6c6', '#fff', 2.4, [
  'A 510,513 520,680', 'A 640,620 650,680 560,700', 'A 520,690 690,590', 'A 760,513 770,640', 'A 870,680 1000,720 1120,640 1220,540 1340,513', 'A 1040,800 1040,720 1130,650 1200,700 1190,750', 'A 1120,640 1200,700 1260,710', 'A 1380,860 1380,930', 'A 850,870 820,1050', 'A 1110,995 1340,985', 'A 980,850 975,1030 1110,990', 'A 1180,760 1190,880', 'A 1270,760 1260,900',
  'B 610,170 700,0', 'B 510,145 560,135 620,170 680,150', 'B 350,120 530,0', 'B 800,80 860,0', 'B 880,60 970,65 1110,35 1110,10', 'B 700,50 800,85 870,130', 'B 1300,80 1270,290 1300,360', 'B 1190,390 1330,350 1370,330 1375,220 1420,205', 'B 1110,350 1150,385 1200,380', 'B 1420,40 1420,180', 'B 1400,450 1500,560 1568,600',
  'C 0,800 140,720', 'C 60,740 200,560', 'C 90,820 300,800 410,760 510,700', 'C 270,640 330,780 400,960', 'C 510,690 650,640 740,605', 'C 580,750 720,900 800,1020', 'C 220,520 300,640', 'C 420,640 520,700', 'C 560,1080 700,1070 820,1010', 'C 800,1020 900,1020', 'C 160,980 300,930 400,960', 'C 440,970 600,1000',
  'D 500,90 620,100 740,20 830,15', 'D 180,370 410,365 450,400 500,380', 'D 520,370 480,540 440,620', 'D 420,30 450,140 380,110', 'D 650,540 730,610 800,560', 'D 730,540 730,620', 'D 690,540 780,620', 'D 660,590 720,530', 'D 230,720 340,720 400,670', 'D 660,660 780,650', 'D 560,540 620,560', 'D 250,530 230,580', 'D 1050,740 1000,800', 'D 1100,690 1080,800', 'D 960,100 1060,40']);

/* tertiary roads */
road('#b6b6b6', '#fff', 3, [
  'C 870,513 880,600', 'C 1330,540 1290,680 1240,900 1200,960', 'D 1050,30 990,120 980,350 930,520 930,640 960,700 975,870 940,1022', 'D 970,965 1030,1022', 'D 840,80 900,130 990,130 1120,170 1290,240 1450,275', 'D 840,90 740,260 720,340', 'D 830,15 850,80', 'D 1100,670 1180,635 1310,640 1350,605 1510,605',
  'E 560,396 545,440 430,600 350,680 370,780 400,900 380,1080', 'E 230,655 380,590 500,650 590,740', 'E 0,770 140,720 230,655', 'E 760,396 745,460 710,540 705,640 730,710 695,790 690,900 700,1040 665,1110 665,1155', 'E 1170,396 1120,500 1145,610 1105,690 1085,870 1040,965 980,1010 910,1100 830,1190 780,1270 720,1300', 'E 720,555 800,555 860,580 940,600 990,635 1070,640 1105,690 1020,750 930,740 820,770 740,795 690,795', 'E 1110,700 1240,715 1340,735 1420,760 1440,780 1568,830', 'E 395,1100 330,1170 270,1210 200,1220 20,1235 0,1245', 'E 300,1245 460,1260 550,1300 620,1295', 'E 550,1300 480,1380 440,1470', 'E 430,1410 520,1410 620,1380 720,1355 900,1355 1050,1325', 'E 715,1360 720,1490 735,1550', 'E 665,1160 780,1190 860,1250 1050,1325 1170,1375 1300,1500 1390,1568', 'E 1230,1130 1290,1040 1400,1030 1450,1060 1568,980', 'E 0,960 130,970', 'E 620,1210 640,1330 715,1360',
  'F 0,750 150,810 200,860', 'F 200,760 260,800 340,815 480,800 540,795 620,745 690,740 800,695 890,570 990,480', 'F 1170,396 1100,510 1100,660 1143,750 1143,830 1110,905 1060,960 970,1010', 'F 1050,1030 1200,1040 1240,1080 1330,1110 1430,1170 1500,1230 1538,1245', 'F 0,1040 80,1060 200,990', 'F 905,1055 880,1130 800,1210 700,1270 630,1350 560,1400 490,1490', 'F 330,1410 310,1490 330,1568']);

/* admin boundaries */
stroke('#cf9bd0', 1.6, '6 3', [
  'C 240,513 380,570 480,660 520,690', 'C 740,513 640,560 540,640 460,740 400,770', 'C 810,520 790,600 880,600 880,690 900,780 925,820 1000,790 1120,800 1260,780', 'C 1190,1010 1130,1090', 'C 1238,1020 1238,1080 1400,1030 1568,980', 'A 1060,540 1070,600 1130,650 1330,513', 'A 1060,560 1140,640',
  'D 990,130 980,350 930,520 930,640', 'D 1085,90 1180,60 1340,5', 'D 930,635 1080,630 1220,590 1440,560', 'D 1330,100 1250,190 1245,290 1210,430 1200,520 1330,515 1330,575', 'D 220,160 340,220 500,180 640,190 720,290 850,340 930,500', 'D 410,930 380,870 420,850 500,840 530,960 750,975 720,1022', 'D 600,970 600,890 640,840 690,830 740,760 820,740 830,700 930,665', 'D 0,410 100,440 110,370', 'D 1440,560 1445,620 1450,700 1410,820 1360,1022', 'B 1445,450 1440,530 1425,575',
  'E 240,396 240,450 340,500 280,560 275,620 230,655', 'E 470,396 430,480 250,396', 'E 230,655 380,590 500,650 590,740', 'E 590,720 640,640 600,600 625,540 695,525 710,470 640,460 670,396', 'E 235,655 300,740 290,770 255,885 140,860 0,845', 'E 290,770 370,780 375,810', 'E 700,540 705,640 730,710 695,790 690,900 700,1040 665,1110 665,1155 560,1010 470,900 410,850', 'E 690,840 775,875 690,915', 'E 660,1155 720,1145 840,1105 900,1095 1060,1085 1170,1040 1280,1020 1390,995 1440,1000 1450,1018 1568,940', 'E 665,1160 780,1190 860,1250 1050,1325 1170,1375', 'E 0,1205 130,1195 130,1175 270,1190 540,1160', 'E 130,1200 135,1290 100,1380 60,1500 40,1568', 'E 110,1360 240,1410 530,1550', 'E 1000,1550 1100,1450 1170,1390 1350,1320 1470,1268 1568,1280', 'E 0,1160 10,1200',
  'F 140,396 150,440 240,430 290,396 430,400', 'F 635,396 680,520 760,660 720,720 620,790 530,815 380,850 360,840 320,880 200,930 60,1015 0,1000', 'F 820,670 855,790 825,840 830,870 800,870 800,940 880,1000 935,1080 930,1170 840,1260 840,1350 820,1420 770,1568', 'F 1143,760 1143,830 1110,905 1190,1010 1320,995 1430,995', 'F 1320,396 1440,420', 'F 300,1155 490,1140 495,1240 600,1230 750,1195', 'F 300,1155 320,1300 200,1290 90,1270 0,1305', 'F 790,1190 810,1130 860,1080 935,1080 960,1180 990,1250 1030,1235 1200,1330 1340,1370 1440,1400 1538,1440 1480,1530 1470,1568', 'F 1370,980 1450,1000 1538,1020']);
stroke('#c2648f', 1.3, '5 4', ['C 1260,780 1370,800 1568,820', 'E 0,628 90,635 220,640', 'D 1340,100 1430,110 1500,140 1568,160', 'D 1445,560 1450,535 1568,555', 'E 410,850 510,945 660,1110', 'E 130,1175 270,1190 540,1160']);
const canton = ['F 705,396 750,490 800,590 820,668 910,690 1090,745 1170,745 1230,650 1310,570 1440,460 1440,396'];
stroke('#a9cf9c', 3.6, '', canton);
stroke('#7c8a7a', 1.8, '9 3', canton);

/* secondary roads */
road('#b9bf72', '#f7fabf', 4, [
  'A 90,608 180,560 340,513', 'A 425,513 425,560 480,580 640,625 740,700 850,730 1000,775 1320,835 1340,820 1330,760 1360,740 1385,660', 'A 640,620 710,555 720,520', 'A 770,700 810,760', 'A 410,875 660,850 740,775 800,760', 'A 725,890 940,845 1040,850 1200,900 1340,940 1470,930 1568,1010', 'A 725,890 770,840 790,810', 'A 1460,640 1450,580 1500,513', 'A 1430,1050 1460,1040',
  'B 1300,360 1350,440 1400,450 1480,430 1530,395 D 0,405 60,380 110,310 130,240 100,120 90,0', 'C 0,925 60,970 100,1010 105,1080 130,1090 150,1060 190,1000 380,970 450,1000 500,1070', 'C 500,1070 570,1040 640,960 740,870 920,825 960,830 1080,890 1160,950 1300,1040 1568,1150',
  'C 0,560 40,513', 'E 0,895 120,950 240,1030 380,1095 540,1135 660,1158 830,1152 850,1168 1020,1170 1200,1135 1310,1125 1410,1160 1510,1158 1568,1148',
  'E 235,396 420,470 545,493 640,465 740,465 830,410 900,400 1040,396', 'F 0,1158 70,1160 180,1148 340,1157 500,1138 720,1138 800,1100 905,1050 960,1037 1150,1025 1290,993 1440,1000 1538,1030', 'F 130,396 145,440 148,485 183,520 183,550 150,605 180,630 200,700 200,860 197,950 300,985 300,1160 320,1310 340,1400 430,1490 480,1500', 'F 860,396 990,462 1095,490 1290,508 1390,495 1450,530 1538,555', 'F 1510,855 1440,910 1400,990 1210,1310 1190,1400 1140,1568', 'E 440,1490 380,1568']);
/* primary roads */
road('#c79555', '#fcd6a4', 4.6, [
  'A 1405,513 1405,600 1385,660 1440,645 1568,710', 'A 1405,600 1405,670', 'C 0,660 145,720 390,600', 'C 145,720 155,780 110,810 70,900 40,1020 0,1060', 'A 1520,1000 1435,1090 B 1435,100 1500,180 1540,340 D 80,350 110,375 190,405 220,440 360,530 480,575 530,605 630,620 920,655 1050,655 1280,750 1568,890', 'D 360,530 500,820 540,860 540,910', 'A 830,640 800,740 780,810 740,790 680,870 610,885', 'E 40,1378 250,1445 440,1505 540,1550', 'B 1435,100 1510,0']);
/* trunk roads */
road('#dc8672', '#f9b29c', 6, ['A 440,555 480,513', 'A 650,513 690,570 770,600 830,610 900,580 1110,513', 'A 830,600 830,640', 'C 350,513 410,590 410,660 390,760 390,860 430,930 520,1040 565,1140 D 480,100 560,330 600,430 635,560 635,640 560,740 515,800 520,900 580,1022', 'C 410,590 480,550 590,520']);
stroke('#f2998a', 3, '', ['D 540,310 515,350 575,375 580,335 530,345 560,310']);

/* railways */
const rails = ['A 660,840 655,720 620,685 430,690 370,760 370,850 400,900 560,885 720,880 950,835 1060,838 1130,780 1250,750 1320,700 1400,695 1440,685 1520,760 1520,850 1560,930 1568,980', 'C 0,1140 100,970 400,840 500,790 600,700 680,660 740,665 870,710 1120,655 1260,530', 'C 0,700 50,750 60,860 100,930 100,970', 'B 1568,0 1430,120 1415,200 1440,330 1480,470 1530,560 D 30,520 130,610 250,720 300,850 375,1022', 'D 0,460 30,515 90,535 140,500 210,435 270,430 600,490 900,545 1300,620 1400,670 1568,780', 'E 0,1243 60,1260 440,1445 665,1550', 'B 1500,500 1480,470'];
stroke('#707070', 3.4, '', rails); stroke('#d8d8d8', 1, '9 7', rails);
stroke('#707070', 1.5, '', ['A 720,885 860,850 960,838', 'A 700,890 860,860 950,840']);
stroke('#aaa', 1.8, '', ['A 340,1110 480,1050 600,940 640,880', 'A 600,1080 620,900', 'A 810,910 750,1080 690,1060 740,890', 'A 400,700 480,620', 'A 320,800 400,720', 'A 490,760 530,670']);
area('#7080b8', 'A 1377,690 1392,690 1392,708 1377,708', 'A 1470,1068 1485,1068 1485,1086 1470,1086', 'D 250,715 260,715 260,728 250,728', 'E 432,1439 446,1439 446,1452 432,1452');
stroke('#8ab8cf', 2, '', ['C 0,1000 100,960 400,825 500,775 620,690 700,650 880,695 1130,640 1240,530']);
stroke('#4a4aff', 1.2, '2 3', ['C 620,690 700,650 880,692 1110,640 1240,520', 'C 480,820 570,805 690,735', 'A 1310,850 1310,740 1340,700', 'A 1080,560 1150,580 1210,530', 'B 460,185 520,155', 'B 620,245 700,212 790,155', 'D 0,630 110,610', 'D 130,110 130,270', 'D 150,260 320,250', 'C 310,680 310,590', 'A 880,575 930,560 940,513']);
stroke('#6f7ff0', 1.4, '6 6', ['A 34,530 90,570 125,680 120,760 95,850 90,1010 105,1080 180,1140 B 240,200 370,275 590,345 690,345 940,297', 'B 272,1015 940,310 1110,190 1360,30', 'B 842,1015 950,320', 'B 930,1022 948,300 1100,180 1350,20', 'B 960,310 1140,190 1370,40', 'B 1145,180 1150,310']);

/* graticule */
for (const x of [543.7, 835.4, 1127, 1417.6, 1709, 2000.5, 2291.5]) el(map, 'rect', {x: x - .7, y: 641, width: 1.4, height: 500, fill: '#000', opacity: .2});
el(map, 'rect', {x: 274, y: 850, width: 2205, height: 1.4, fill: '#000', opacity: .2});

/* road shields: text, centre x, centre y, width, kind */
function shield(t, x, y, w, kind) {
  const c = {w: ['#f2f2f2', '#bbb', '#555'], y: ['#f1f1cf', '#b9bd86', '#4d5212'], o: ['#f6e0c8', '#d0a078', '#60380c']}[kind];
  el(map, 'rect', {x: x - w / 2, y: y - 8.5, width: w, height: 17, rx: 2, fill: c[0], stroke: c[1]});
  el(map, 'text', {x, y: y + 4, 'text-anchor': 'middle', 'font-size': 11, fill: c[2], textLength: w - 12, lengthAdjust: 'spacingAndGlyphs'}, t);
}
[['D 107',1705,658,39,'y'],['D 109',1826,704,39,'w'],['D 210',1669,743,39,'w'],['D 203E',1435.5,788,46,'w'],['D 203',1549,828,39,'w'],['D 108',1628,966,39,'y'],['D 204',1496,1002,39,'w'],['D 264',1909,916,39,'w'],['D 939',1397,1059.5,39,'o'],['D108E1',1239,695,46,'w'],['D 107E5',1330,640,52,'w'],['D 108',1292,798,39,'y'],['D 112',2002,836,39,'y'],['D 107',2301,676,39,'y'],['D 108',2419,906,39,'y'],['D 113',2218,990,39,'w'],['D 108',2477,831,39,'y'],['D 735',280,683,36,'y']].forEach(a => shield(...a));

/* place names: text, centre x, baseline, width, size, style */
function label(t, x, y, w, size, kind) {
  const c = {p: '#222', r: '#a6122f', z: '#6f4a78', b: '#5b86c4'}[kind || 'p'];
  el(map, 'text', {x, y, 'text-anchor': 'middle', 'font-size': size || 12, 'font-style': kind ? 'italic' : 'normal', fill: c, stroke: '#fff', 'stroke-opacity': .75, 'stroke-width': 2.5, 'stroke-linejoin': 'round', 'paint-order': 'stroke', textLength: w, lengthAdjust: 'spacingAndGlyphs'}, t);
}
[['La Rochelle',824,779.5,73,14],['La Pallice',448,738,52],['Laleu',531,686.5,30],['Mireuil',662,682,38],['Fétilly',795,666,32],['La Trompette',790.5,687,75],['Rossignolette',625,729,76],['La Genette',710.5,772,60],['Port Neuf',642,795,55],['Chef de Baie',530,822,70],
 ['Viaduc',367,705,31,11],['Président',367,717,44,11],['Christian',367,729.5,42,11],['Mörch',367,742,30,11],
 ['Les Minimes',767.5,919.5,70],['Bellevue',842,938,47],['Tasdon',868,873,40],['Bongraine',906,923,58],['Beauregard',934.5,679,66],['Les Gonthières',1058.5,680,77],['Rompsay',1056,710,47],['Saint-Éloi',924,754,52],['Villeneuve',987,830,57],['Les Salines',987,846,60],['Périgny',1163,819,39],['Saint-Rogatien',1301,856,76],['Aytré',1041,996,26],['La Jarne',1286,1036,41],
 ['Bourgneuf',1568,711,55],['Montroy',1643,811,43],["Saint-Médard-",1874,775,73],["d'Aunis",1874,790,37],['Clavette',1546,933,42],['La Jarrie',1655,1038,41],['Saint-Christophe',2013,896,86],['Virson',2288,920,32],['Aigrefeuille-',2092,1131,62],["d'Aunis",2092,1145,37],
 ['Aéroport - Laleu',524,651,71,11,'r'],['Aéroport - Laleu',574,672,71,11,'r'],['Mireuil',686,650.5,32,11,'r'],['Laleu - La Pallice',588,714.5,74,11,'r'],['Puilboreau - Rompsay',1054,650.5,97,11,'r'],['N 237 (Ile de Ré)',1023,664,72,11,'r'],['Périgny - Villeneuve les Salines',1039,815,134,11,'r'],['Zone des Cottes Mailles',1078,900.5,103,11,'r'],['Zone des Cottes Mailles',1095,935.5,103,11,'r'],['Aytré ZI Belle Aire - Surgères',1114.5,981.5,124,11,'r'],['Aytré ZI Belle Aire - Surgères',1113.5,1029,124,11,'r'],['La Rochelle-Gare - Aytré-Centre',1081,1116,137,11,'r'],
 ['Zone Industrielle',1096,756,89,12,'z'],['de Périgny',1096,770,57,12,'z'],['Grand',334,772,28,11,'b'],['Port Maritime',334,784,61,11,'b'],['de La',334,796,24,11,'b'],['Rochelle',334,808,37,11,'b']].forEach(a => label(...a));
function along(id, s, t, size, color) {
  el(map, 'path', {id, d: curve(s), fill: 'none'});
  const e = el(map, 'text', {'font-size': size, fill: color, stroke: '#fff', 'stroke-opacity': .5, 'stroke-width': 1.5, 'paint-order': 'stroke', dy: 3});
  el(e, 'textPath', {href: '#' + id}, t);
}
along('n1', 'A 110,612 180,575 275,530', "Pont de l'Île de Ré", 7.8, '#333');
along('n2', 'A 655,888 700,840 760,785', 'Rue Roberval', 8.5, '#333');
along('n3', 'D 515,175 620,155 670,125 750,65', 'Canal de la Moulinette', 10, '#5b86c4');
along('n4', 'B 1185,195 1320,95', 'Bus de mer', 10.5, '#6f7ff0');
along('n5', 'F 183,628 200,690 203,835', 'Route du Moulin Neuf', 9, '#333');
along('n6', 'F 1500,1018 1570,1030', 'Rue', 9, '#333');

/* base and rover markers */
el(map, 'circle', {cx: 791, cy: 912.7, r: 3.2, fill: '#12e012', stroke: '#0a8a3a', 'stroke-width': 1});
el(map, 'circle', {cx: 2010.5, cy: 725.5, r: 5.9, fill: '#fff', stroke: '#000', 'stroke-width': 2.2});
el(map, 'circle', {cx: 2010.5, cy: 725.5, r: 2.9, fill: '#009688'});
</script>
</body>
</html>
